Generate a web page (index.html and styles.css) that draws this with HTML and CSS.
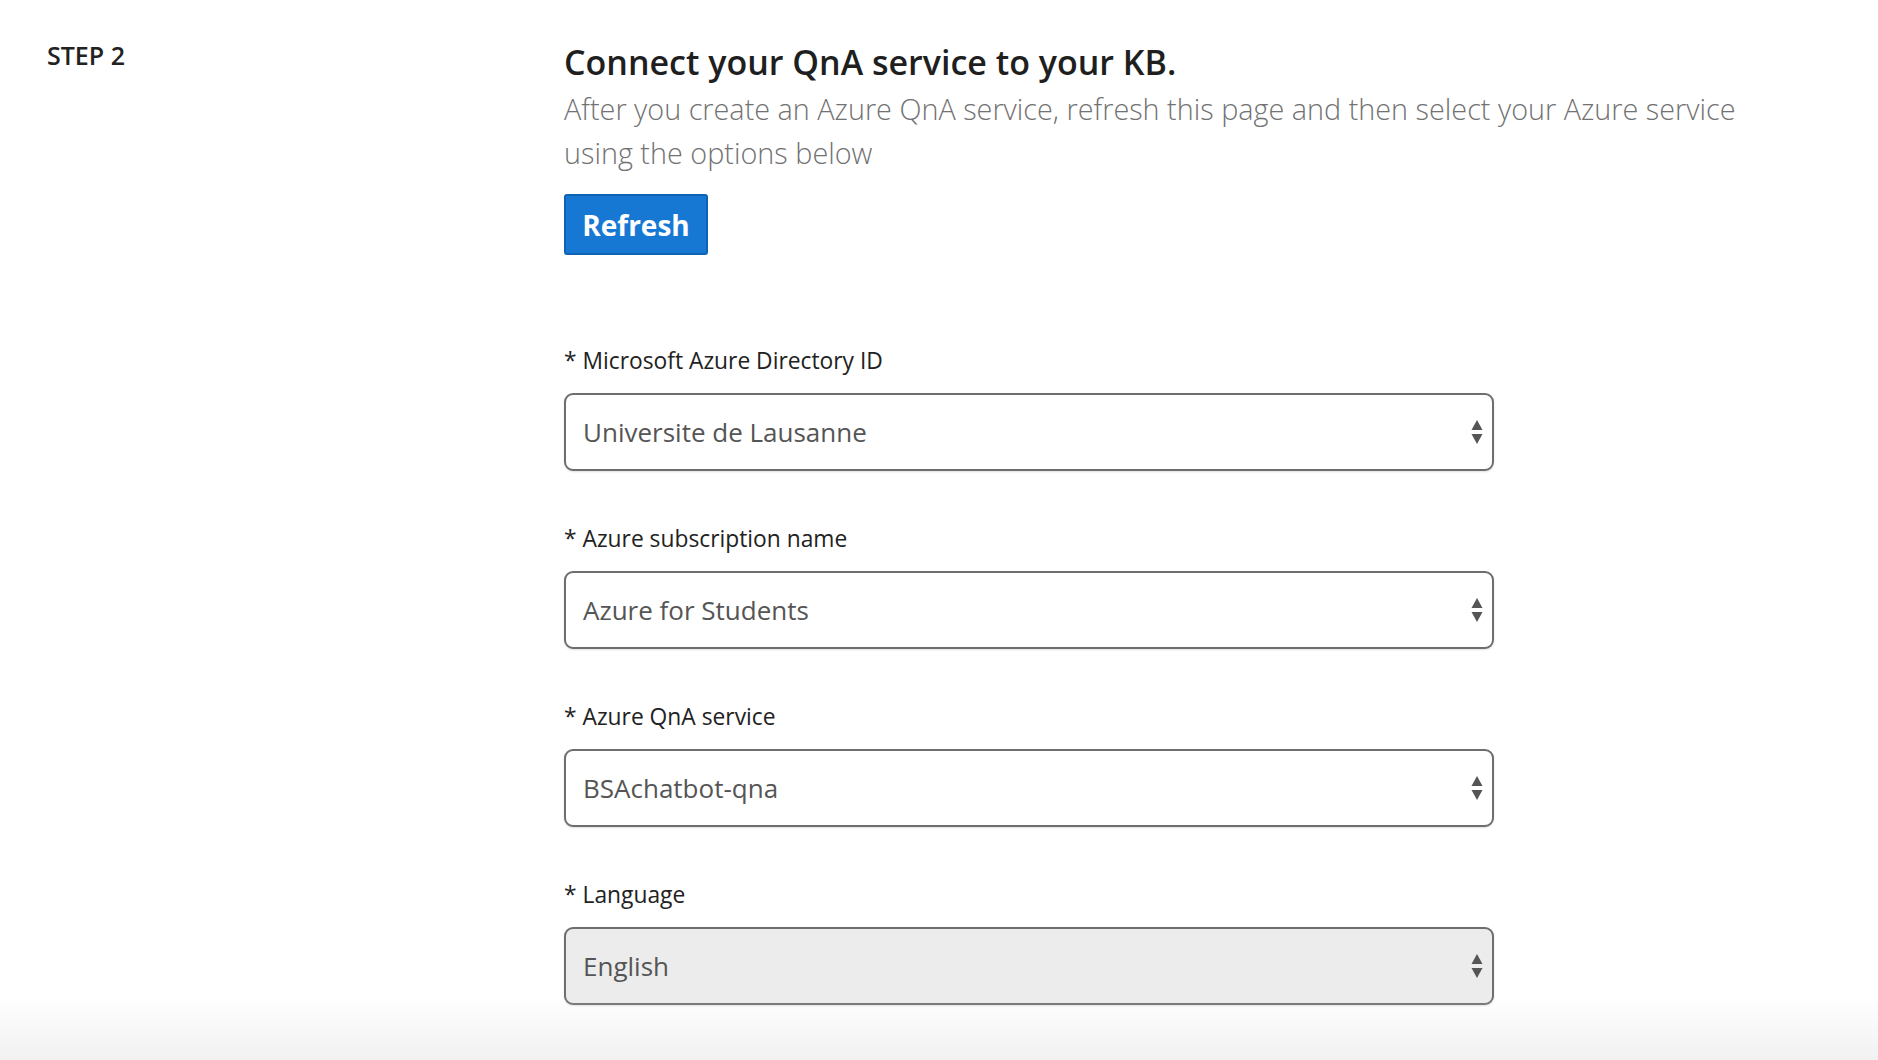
FILE: index.html
```html
<!DOCTYPE html>
<html lang="en">
<head>
<meta charset="utf-8">
<title>Connect your QnA service to your KB</title>
<link rel="stylesheet" href="styles.css">
</head>
<body>
<main class="page">
  <div class="step-col">
    <div class="step-label">STEP 2</div>
  </div>
  <section class="content-col">
    <h1 class="title">Connect your QnA service to your KB.</h1>
    <p class="subtitle">After you create an Azure QnA service, refresh this page and then select your Azure service using the options below</p>
    <button class="btn-refresh" type="button">Refresh</button>

    <div class="form">
      <div class="field">
        <label class="field-label">* Microsoft Azure Directory ID</label>
        <div class="select-wrap">
          <select class="select"><option>Universite de Lausanne</option></select>
          <svg class="select-arrows" width="12" height="26" viewBox="0 0 12 26"><path d="M6 1 L11.5 11 H0.5 Z" fill="#555"/><path d="M6 25 L11.5 15 H0.5 Z" fill="#555"/></svg>
        </div>
      </div>
      <div class="field">
        <label class="field-label">* Azure subscription name</label>
        <div class="select-wrap">
          <select class="select"><option>Azure for Students</option></select>
          <svg class="select-arrows" width="12" height="26" viewBox="0 0 12 26"><path d="M6 1 L11.5 11 H0.5 Z" fill="#555"/><path d="M6 25 L11.5 15 H0.5 Z" fill="#555"/></svg>
        </div>
      </div>
      <div class="field">
        <label class="field-label">* Azure QnA service</label>
        <div class="select-wrap">
          <select class="select"><option>BSAchatbot-qna</option></select>
          <svg class="select-arrows" width="12" height="26" viewBox="0 0 12 26"><path d="M6 1 L11.5 11 H0.5 Z" fill="#555"/><path d="M6 25 L11.5 15 H0.5 Z" fill="#555"/></svg>
        </div>
      </div>
      <div class="field">
        <label class="field-label">* Language</label>
        <div class="select-wrap">
          <select class="select select-disabled"><option>English</option></select>
          <svg class="select-arrows" width="12" height="26" viewBox="0 0 12 26"><path d="M6 1 L11.5 11 H0.5 Z" fill="#555"/><path d="M6 25 L11.5 15 H0.5 Z" fill="#555"/></svg>
        </div>
      </div>
    </div>
  </section>
</main>
<div class="bottom-fade"></div>
</body>
</html>
```
FILE: styles.css
```css
* { box-sizing: border-box; }
html, body { margin: 0; padding: 0; background: #fff; }
body {
  font-family: "Open Sans", "Noto Sans", "Liberation Sans", sans-serif;
  color: #222;
  height: 1060px;
  overflow: hidden;
}
.page {
  display: flex;
  padding-top: 42px;
}
.step-col {
  width: 564px;
  padding-left: 47px;
  flex: none;
}
.step-label {
  font-size: 25px;
  font-weight: 600;
  line-height: 30px;
  color: #222;
  margin-top: -2px;
}
.content-col {
  flex: 1;
  padding-right: 120px;
}
.title {
  margin: 0;
  font-size: 34px;
  font-weight: 600;
  line-height: 40px;
  color: #1f1f1f;
}
.subtitle {
  margin: 5px 0 0;
  font-size: 28.8px;
  font-weight: 300;
  line-height: 44px;
  color: #727272;
}
.btn-refresh {
  display: block;
  margin-top: 19px;
  width: 144px;
  height: 61px;
  background: #1778d4;
  border: 2px solid #0e63b3;
  border-radius: 3px;
  color: #fff;
  font-family: inherit;
  font-size: 28px;
  font-weight: 700;
  padding: 0;
}
.form {
  margin-top: 92px;
  display: flex;
  flex-direction: column;
  gap: 54px;
  width: 930px;
}
.field {
  display: flex;
  flex-direction: column;
  gap: 16px;
}
.field-label {
  font-size: 22.8px;
  line-height: 30px;
  color: #222;
  margin-top: -1px;
  margin-bottom: 1px;
}
.select-wrap {
  position: relative;
}
.select {
  display: block;
  width: 930px;
  height: 78px;
  -webkit-appearance: none;
  appearance: none;
  background: #fff;
  border: 2px solid #6e6e6e;
  border-radius: 9px;
  box-shadow: 0 1px 2px rgba(0,0,0,0.12);
  font-family: inherit;
  font-size: 26px;
  color: #555;
  padding: 0 50px 0 17px;
}
.select-disabled {
  background: #ececec;
}
.select-arrows {
  position: absolute;
  right: 11px;
  top: 26px;
}
.bottom-fade {
  position: fixed;
  left: 0;
  right: 0;
  bottom: 0;
  height: 62px;
  background: linear-gradient(to bottom, rgba(240,240,240,0), #f1f1f1);
  pointer-events: none;
}
```
